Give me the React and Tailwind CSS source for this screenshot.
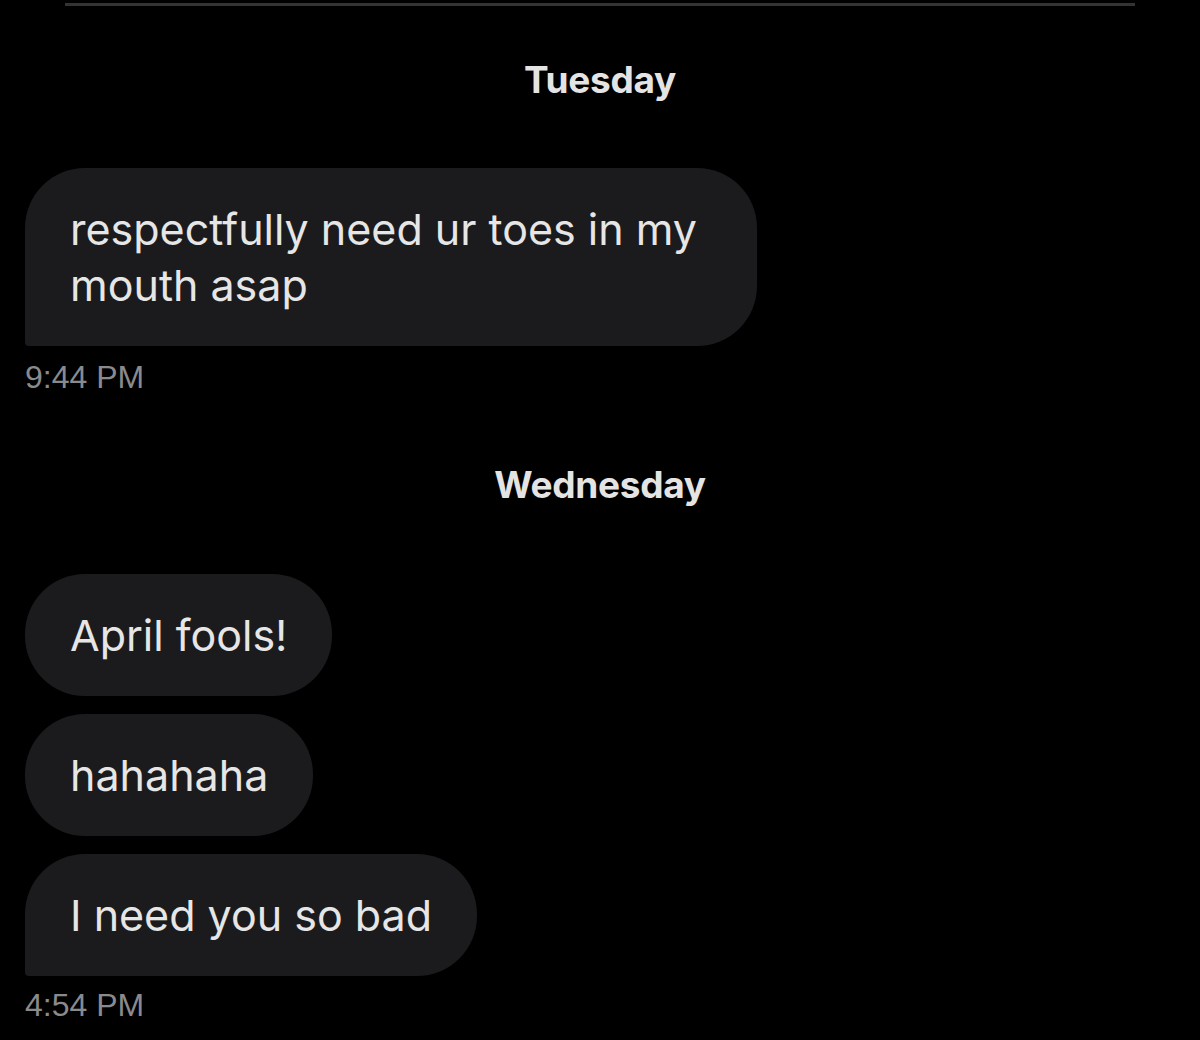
import React from 'react';

const font = { fontFamily: 'Inter, "Noto Sans", sans-serif' };

const DayLabel = ({ children, className = '' }) => (
  <div className={`text-center text-[37px] leading-[40px] font-bold tracking-[-0.3px] text-[#e4e4e4] ${className}`}>
    {children}
  </div>
);

const Bubble = ({ children, className = '', last }) => (
  <div
    className={`bg-[#1b1b1d] text-[#e6e6e6] text-[43px] leading-[56px] px-[45px] py-[33px] rounded-[60px] ${last ? 'rounded-bl-[4px]' : ''} ${className}`}
  >
    {children}
  </div>
);

const Time = ({ children, className = '' }) => (
  <div
    className={`text-[32px] leading-[40px] text-[#8a8a8c] ${className}`}
    style={{ fontFamily: '"Liberation Sans", Arial, sans-serif' }}
  >
    {children}
  </div>
);

export default function App() {
  return (
    <div className="w-[1200px] h-[1040px] bg-black overflow-hidden" style={font}>
      <div className="mx-[65px] mt-[3px] h-[3px] bg-[#333335]" />

      <DayLabel className="mt-[54px]">Tuesday</DayLabel>

      <div className="px-[25px] mt-[68px] flex flex-col items-start">
        <Bubble last className="w-[732px] rounded-[50px] rounded-bl-[4px]">
          respectfully need ur toes in my
          <br />
          mouth asap
        </Bubble>
        <Time className="mt-[11px]">9:44 PM</Time>
      </div>

      <DayLabel className="mt-[68px]">Wednesday</DayLabel>

      <div className="px-[25px] mt-[69px] flex flex-col items-start gap-[18px]">
        <Bubble>April fools!</Bubble>
        <Bubble>hahahaha</Bubble>
        <Bubble last>I need you so bad</Bubble>
      </div>
      <div className="px-[25px]">
        <Time className="mt-[9px]">4:54 PM</Time>
      </div>
    </div>
  );
}
